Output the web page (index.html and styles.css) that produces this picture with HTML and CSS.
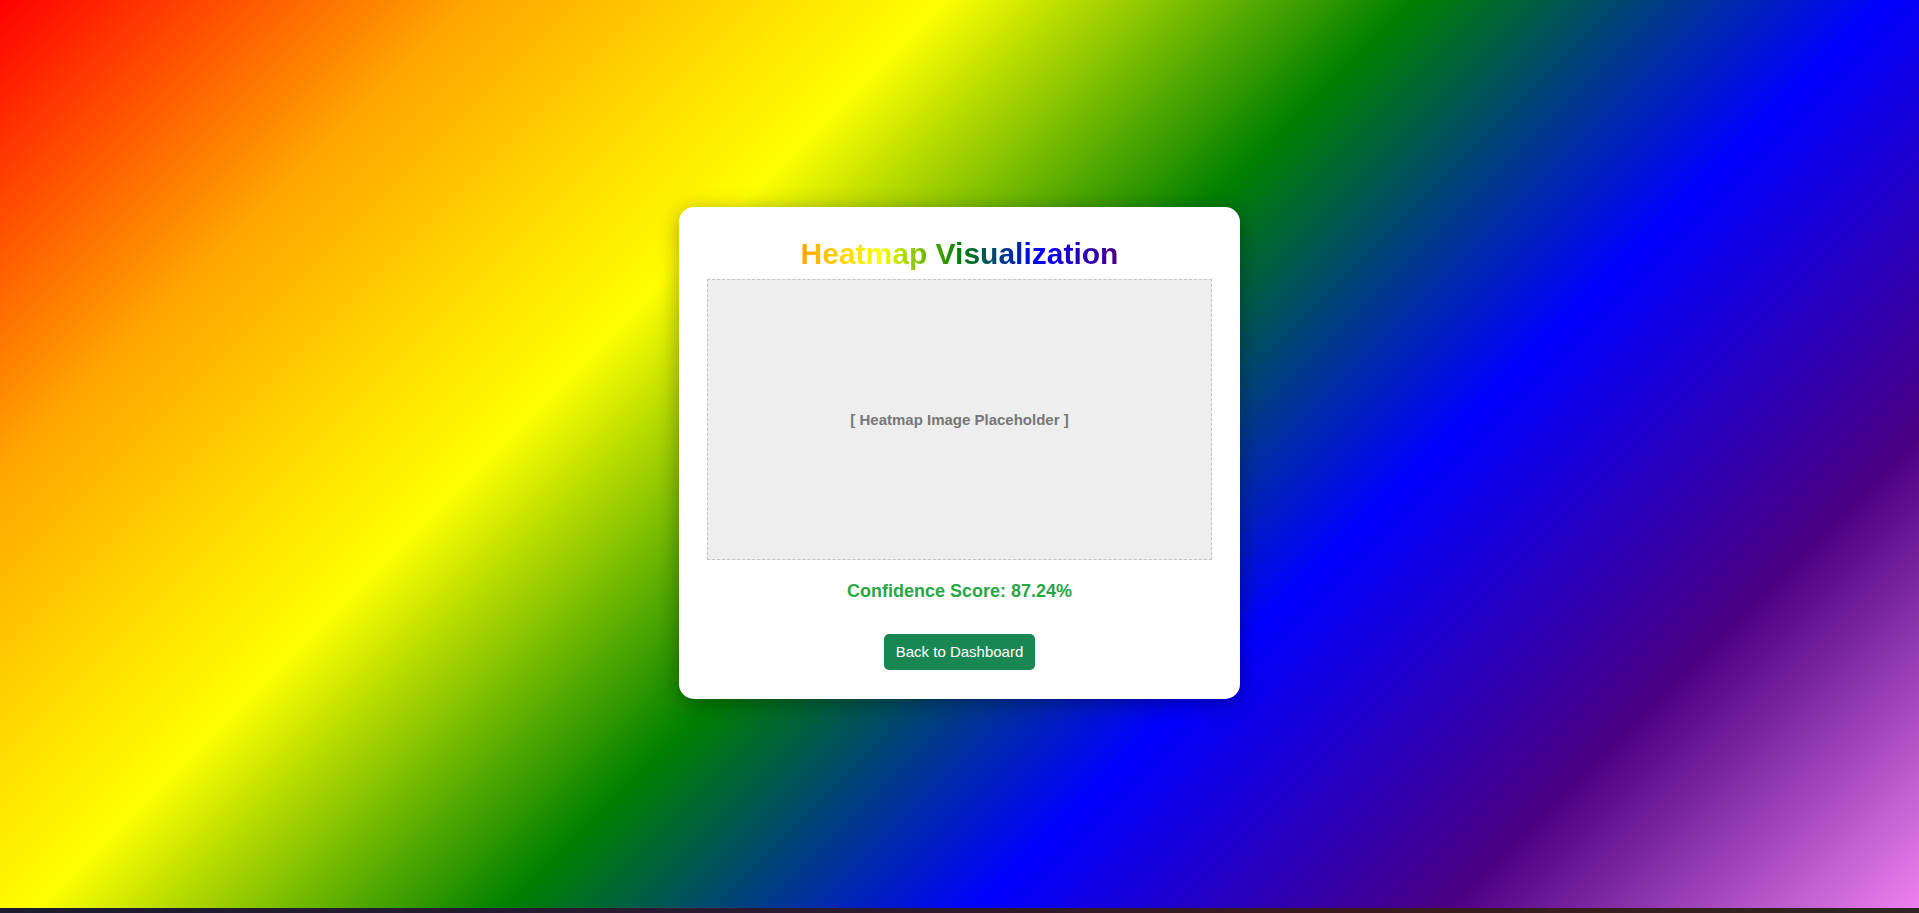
FILE: index.html
```html
<!DOCTYPE html>
<html lang="en">
<head>
<meta charset="UTF-8">
<title>Heatmap Visualization</title>
<link rel="stylesheet" href="styles.css">
</head>
<body>
  <main class="card">
    <h1 class="title">Heatmap Visualization</h1>
    <div class="heatmap-box">[ Heatmap Image Placeholder ]</div>
    <p class="score">Confidence Score: 87.24%</p>
    <div class="actions">
      <a class="btn" href="#">Back to Dashboard</a>
    </div>
  </main>
</body>
</html>
```

FILE: styles.css
```css
html {
  margin: 0;
  padding: 0;
  height: 100%;
  background: linear-gradient(to right, #1c1c2e, #2a1a30 40%, #3a1a1c 70%, #2e2620);
}

body {
  margin: 0;
  height: calc(100vh - 5px);
  font-family: "Liberation Sans", Arial, sans-serif;
  background: linear-gradient(135deg, #ff0000, #ffa500, #ffff00, #008000, #0000ff, #4b0082, #ee82ee);
  display: flex;
  align-items: center;
  justify-content: center;
}

.card {
  width: 505px;
  background: #ffffff;
  border-radius: 15px;
  padding: 30px 28px 29px;
  margin-bottom: 2px;
  box-shadow: 0 4px 22px rgba(0, 0, 0, 0.35);
  text-align: center;
}

.title {
  margin: 0 0 8px;
  font-size: 30px;
  line-height: 34px;
  font-weight: bold;
  display: inline-block;
  background: linear-gradient(to right, #ffa500, #ffff00, #008000, #0000ff, #4b0082);
  -webkit-background-clip: text;
  background-clip: text;
  color: transparent;
}

.heatmap-box {
  height: 279px;
  background: #eeeeee;
  border: 1px dashed #c4c4c4;
  display: flex;
  align-items: center;
  justify-content: center;
  color: #777777;
  font-weight: bold;
  font-size: 15px;
}

.score {
  margin: 21px 0 33px;
  font-size: 18px;
  line-height: 20px;
  font-weight: bold;
  color: #28a745;
}

.actions {
  display: flex;
  justify-content: center;
}

.btn {
  display: inline-block;
  background: #198754;
  color: #ffffff;
  text-decoration: none;
  font-size: 15px;
  line-height: 16px;
  padding: 10px 12px;
  border-radius: 5px;
}
```
